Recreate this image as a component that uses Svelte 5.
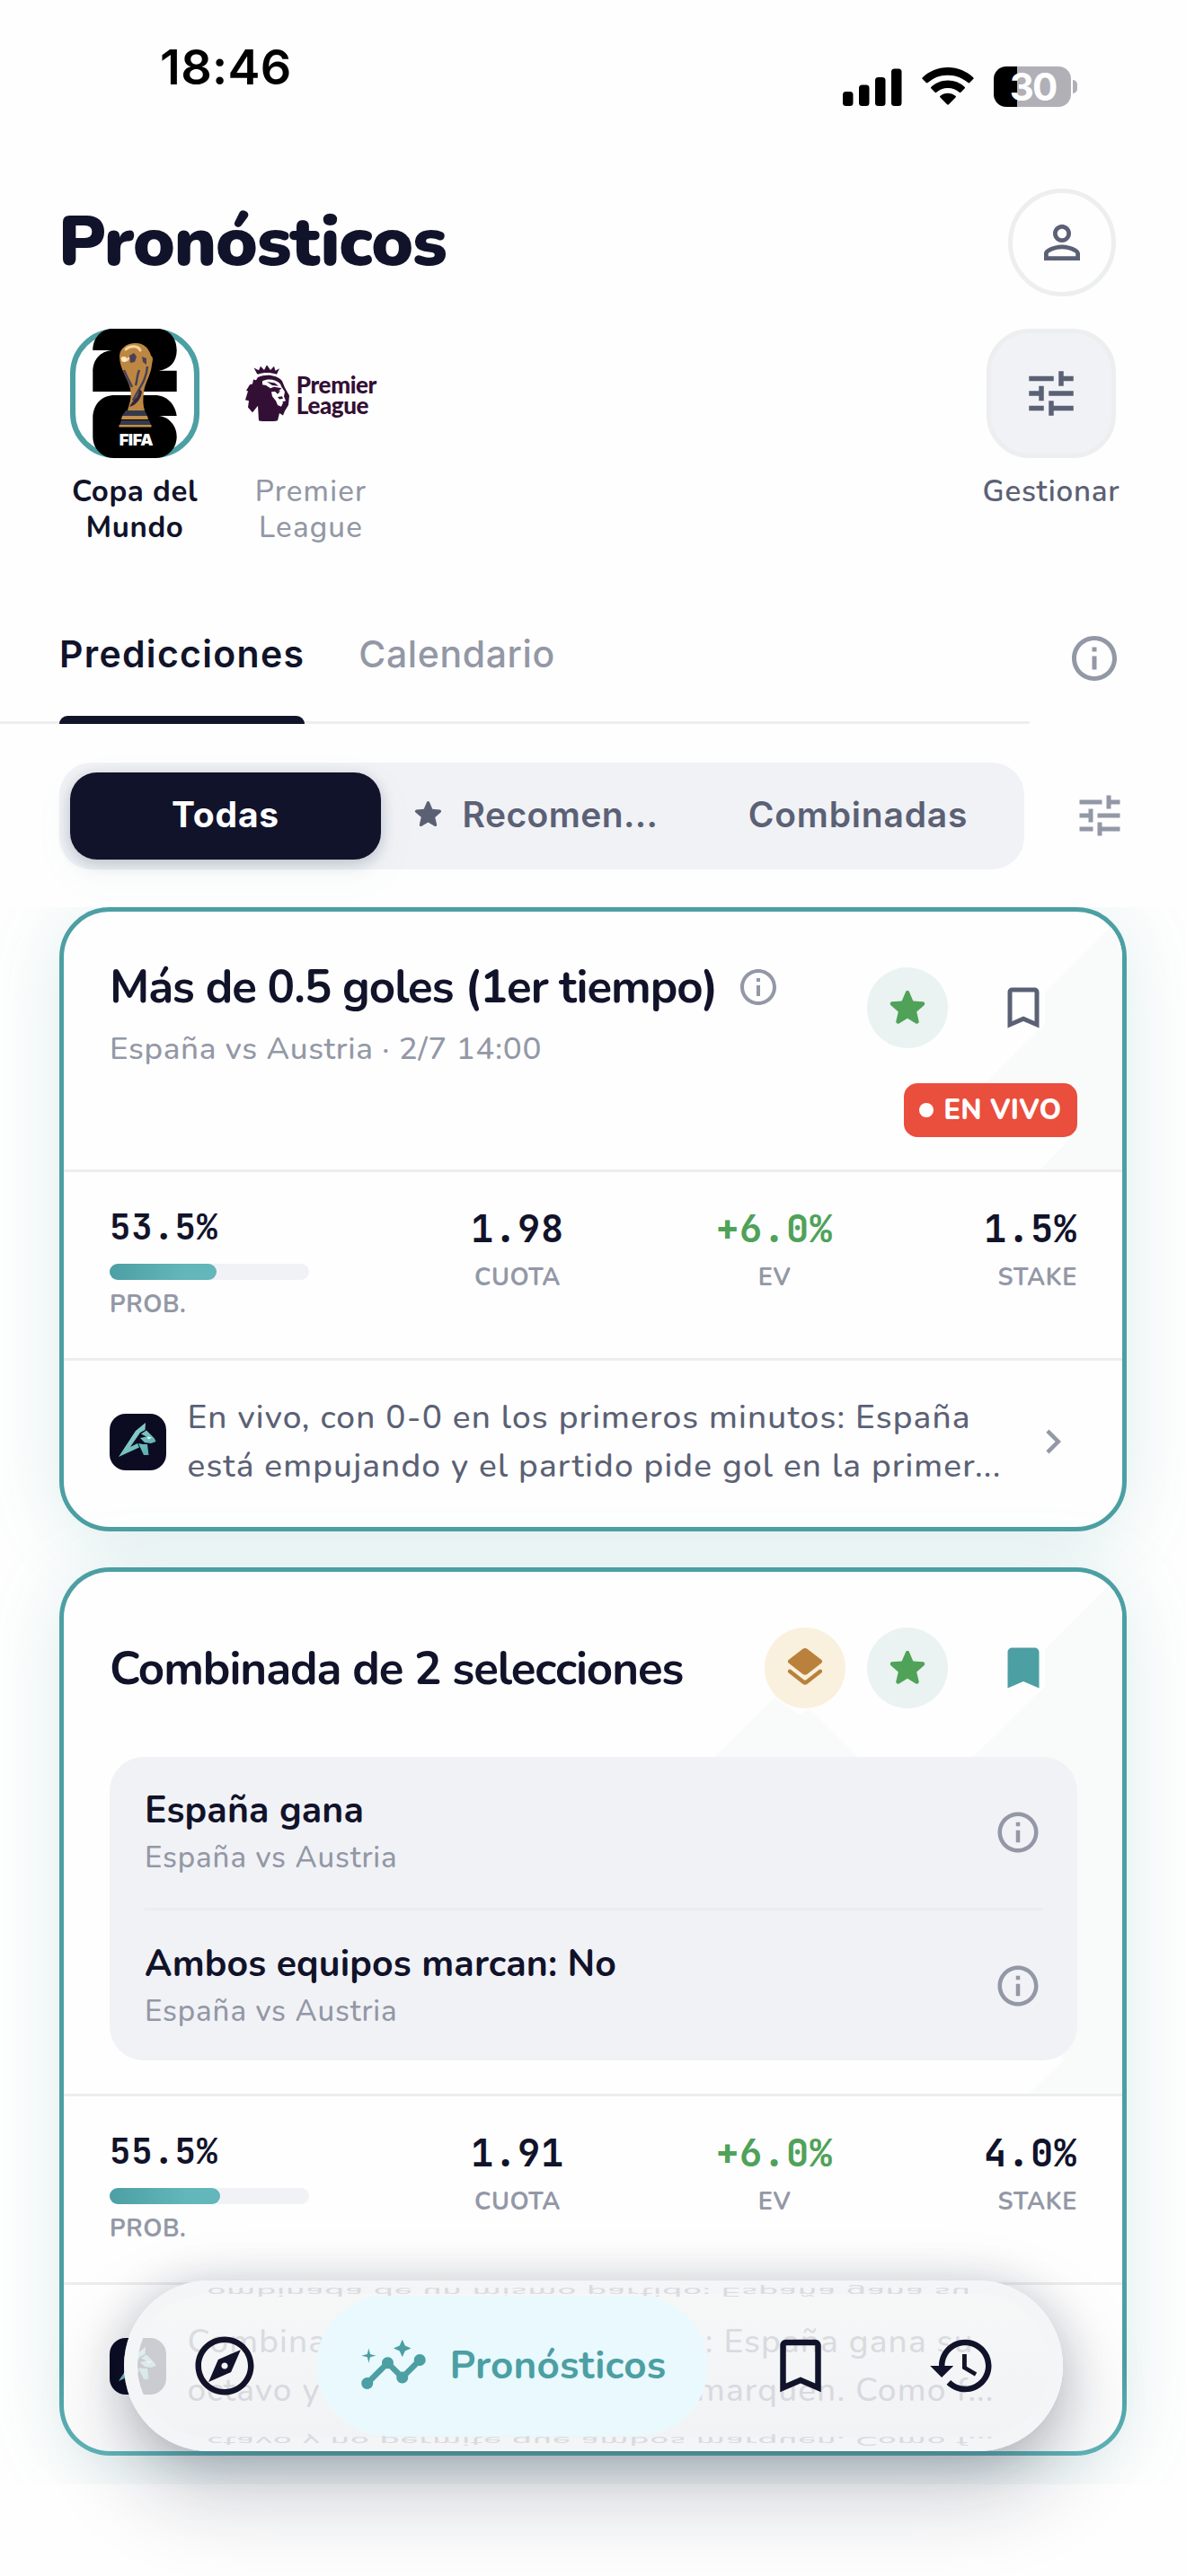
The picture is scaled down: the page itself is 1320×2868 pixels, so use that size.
<script>
  const icons = {
    person:
      "M12 5.9a2.1 2.1 0 1 1 0 4.2 2.1 2.1 0 0 1 0-4.2m0 9c2.97 0 6.1 1.46 6.1 2.1v1.1H5.9V17c0-.64 3.13-2.1 6.1-2.1M12 4C9.79 4 8 5.79 8 8s1.79 4 4 4 4-1.79 4-4-1.79-4-4-4zm0 9c-2.67 0-8 1.34-8 4v3h16v-3c0-2.66-5.33-4-8-4z",
    tune: "M3 17v2h6v-2H3zM3 5v2h10V5H3zm10 16v-2h8v-2h-8v-2h-2v6h2zM7 9v2H3v2h4v2h2V9H7zm14 4v-2H11v2h10zm-6-4h2V7h4V5h-4V3h-2v6z",
    info: "M11 7h2v2h-2zm0 4h2v6h-2zm1-9C6.48 2 2 6.48 2 12s4.48 10 10 10 10-4.48 10-10S17.52 2 12 2zm0 18c-4.41 0-8-3.59-8-8s3.59-8 8-8 8 3.59 8 8-3.59 8-8 8z",
    star: "M12 17.27l4.15 2.51c.76.46 1.69-.22 1.49-1.08l-1.1-4.72 3.67-3.18c.67-.58.31-1.68-.57-1.75l-4.83-.41-1.89-4.46c-.34-.81-1.5-.81-1.84 0L9.19 8.63l-4.83.41c-.88.07-1.24 1.17-.57 1.75l3.67 3.18-1.1 4.72c-.2.86.73 1.54 1.49 1.08l4.15-2.5z",
    bookmark:
      "M17 3H7c-1.1 0-1.99.9-1.99 2L5 21l7-3 7 3V5c0-1.1-.9-2-2-2zm0 15l-5-2.18L7 18V5h10v13z",
    bookmarkFilled: "M17 3H7c-1.1 0-1.99.9-1.99 2L5 21l7-3 7 3V5c0-1.1-.9-2-2-2z",
    layers:
      "M12.6 18.1a1 1 0 0 1-1.2 0l-6.6-5.15a1 1 0 0 0-1.25 0 1 1 0 0 0 0 1.6l7.2 5.6a2 2 0 0 0 2.5 0l7.2-5.6a1 1 0 0 0 0-1.6 1 1 0 0 0-1.25 0zM13.25 15.1l7.2-5.6a1.02 1.02 0 0 0 0-1.6l-7.2-5.6a2 2 0 0 0-2.5 0l-7.2 5.6a1.02 1.02 0 0 0 0 1.6l7.2 5.6a2 2 0 0 0 2.5 0z",
    chevron: "M10 6L8.59 7.41 13.17 12l-4.58 4.59L10 18l6-6z",
    compass:
      "M12 10.9c-.61 0-1.1.49-1.1 1.1s.49 1.1 1.1 1.1c.61 0 1.1-.49 1.1-1.1s-.49-1.1-1.1-1.1zM12 2C6.48 2 2 6.48 2 12s4.48 10 10 10 10-4.48 10-10S17.52 2 12 2zm0 18c-4.41 0-8-3.59-8-8s3.59-8 8-8 8 3.59 8 8-3.59 8-8 8zM14.19 14.19L6.5 17.5l3.31-7.69L17.5 6.5z",
    insights:
      "M21 8c-1.45 0-2.26 1.44-1.93 2.51l-3.55 3.56c-.3-.09-.74-.09-1.04 0l-2.55-2.55C12.27 10.45 11.46 9 10 9c-1.45 0-2.27 1.44-1.93 2.52l-4.56 4.55C2.44 15.74 1 16.55 1 18c0 1.1.9 2 2 2 1.45 0 2.26-1.44 1.93-2.51l4.55-4.56c.3.09.74.09 1.04 0l2.55 2.55C12.73 16.55 13.54 18 15 18c1.45 0 2.27-1.44 1.93-2.52l3.56-3.55c1.07.33 2.51-.48 2.51-1.93 0-1.1-.9-2-2-2zM15 9l.94-2.07L18 6l-2.06-.93L15 3l-.92 2.07L12 6l2.08.93zM3.5 11L4 9l2-.5L4 8l-.5-2L3 8l-2 .5L3 9z",
    history:
      "M13 3c-4.97 0-9 4.03-9 9H1l3.89 3.89.07.14L9 12H6c0-3.87 3.13-7 7-7s7 3.13 7 7-3.13 7-7 7c-1.93 0-3.68-.79-4.94-2.06l-1.42 1.42C8.27 19.99 10.51 21 13 21c4.97 0 9-4.03 9-9s-4.03-9-9-9zm-1 5v5l4.28 2.54.72-1.21-3.5-2.08V8H12z",
  };

  const cards = [
    {
      title: "Más de 0.5 goles (1er tiempo)",
      match: "España vs Austria · 2/7 14:00",
      live: true,
      saved: false,
      legs: [],
      prob: 53.5,
      odds: "1.98",
      ev: "+6.0%",
      stake: "1.5%",
      analysis: [
        "En vivo, con 0-0 en los primeros minutos: España",
        "está empujando y el partido pide gol en la primer...",
      ],
    },
    {
      title: "Combinada de 2 selecciones",
      live: false,
      saved: true,
      legs: [
        { pick: "España gana", match: "España vs Austria" },
        { pick: "Ambos equipos marcan: No", match: "España vs Austria" },
      ],
      prob: 55.5,
      odds: "1.91",
      ev: "+6.0%",
      stake: "4.0%",
      analysis: [
        "Combinada de un mismo partido: España gana su",
        "octavo y no permite que ambos marquen. Como f...",
      ],
    },
  ];
</script>

{#snippet icon(name, size)}
  <svg class="icon" width={size} height={size} viewBox="0 0 24 24">
    <path d={icons[name]} fill="currentColor" />
  </svg>
{/snippet}

<main>
  <div class="status">
    <span class="time">18:46</span>
    <div class="signals">
      <svg width="66" height="42" viewBox="0 0 66 42">
        <rect x="0" y="26" width="11.5" height="16" rx="3.5" />
        <rect x="18" y="18.5" width="11.5" height="23.5" rx="3.5" />
        <rect x="36" y="10" width="11.5" height="32" rx="3.5" />
        <rect x="54" y="0.5" width="11.5" height="41.5" rx="3.5" />
      </svg>
      <svg class="wifi" width="58" height="43" viewBox="0 0 58 43">
        <path d="M29 0C18 0 8 4.300 0.800 11.300a1.200 1.200 0 0 0 0 1.800l4 4c.5.500 1.300.500 1.800 0A32.500 32.500 0 0 1 29 8.700c8.700 0 16.600 3.200 22.400 8.400.5.500 1.300.500 1.800 0l4-4a1.200 1.200 0 0 0 0-1.800C50 4.300 40 0 29 0z" />
        <path d="M29 14.500c-7.200 0-13.700 2.800-18.600 7.300a1.200 1.200 0 0 0 0 1.800l4.200 4.200c.5.500 1.200.5 1.700 0A18.500 18.500 0 0 1 29 22.900c4.900 0 9.300 1.900 12.700 4.900.5.500 1.200.500 1.700 0l4.200-4.200a1.200 1.200 0 0 0 0-1.800A27.300 27.300 0 0 0 29 14.500z" />
        <path d="M29 28.700c-3.200 0-6.200 1.200-8.500 3.100a1.200 1.200 0 0 0 0 1.800l7.600 7.700c.5.500 1.300.5 1.800 0l7.600-7.700a1.200 1.200 0 0 0 0-1.800A13.300 13.300 0 0 0 29 28.700z" />
      </svg>
      <div class="battery">30</div>
      <span class="battery-cap"></span>
    </div>
  </div>

  <header>
    <h1>Pronósticos</h1>
    <div class="avatar">{@render icon("person", 60)}</div>
  </header>

  <section class="leagues">
    <div class="league active">
      <svg width="144" height="144" viewBox="0 0 144 144">
        <rect x="3" y="3" width="138" height="138" rx="47" fill="#fff" stroke="#4c9fa3" stroke-width="6" />
        <path d="M25.300 24C25.300 10 35 0 47 0H97C110 0 118.700 10 118.700 24C118.700 36 112 45 98.700 46.700H118.700V70H25.300V48C25.300 35 33 25 47 24Z" />
        <path d="M25.300 100C25.300 84 35 74 50 74H94C108 74 117 84 118.700 97H98.700C110 98 118.700 108 118.700 120C118.700 134 108 144 95 144H49C36 144 25.300 134 25.300 120Z" />
        <path d="M73 16c9 0 15 6 17 14 3 2 2 5 1 10-1 12-8 20-9 31-1 8-1 14 1 20H64c2-8 5-14 3-24-2-11-12-22-12-36 0-9 8-15 18-15z" fill="#bd8742" />
        <path d="M62 23c5-5 14-4 16 1M58 33c2 3 5 3 7 0" fill="none" stroke="#f4d3a0" stroke-width="3" stroke-linecap="round" />
        <path d="M66 30l5-3 3 4-2 6-5 1zM80 31l5 2 0 7-4-3z" fill="#49405a" />
        <path d="M86 42c-1 15-8 22-16 38M60 46c3 8 6 12 9 19M77 46c-3 7-2 11-4 17" fill="none" stroke="#49405a" stroke-width="2.500" />
        <path d="M77 67c0 9-7 12-11 20 8-2 13-9 14-17z" fill="#2e2540" />
        <circle cx="60" cy="34" r="3" fill="#ffe7c4" />
        <path d="M62 91h21l3 6H58zM57 102h31l2 5H55z" fill="#343a4d" />
        <path d="M58 97h28l1 4H57zM54.500 107h36v2.500h-36z" fill="#c38f4b" />
        <text x="73.500" y="130" text-anchor="middle">FIFA</text>
      </svg>
      <span>Copa del<br />Mundo</span>
    </div>
    <div class="league">
      <div class="premier">
        <svg width="50" height="62" viewBox="0 0 50 76" preserveAspectRatio="none">
          <path d="M13 11L9.500 3l5.500 3.500L17 1l4 5 3-7 4 7 4-5 1.500 6L38 4l-3 8c-7-3-15-3-21 0z" />
          <path d="M14 16c10-5 21-3 27 5l3 9 5 11-1 13-4 8-2 6-4-3-2 10c-7 2-15 2-21 0l-1-20-6 9-5-7 1-9-4-1 3-12-2-1 4-8 3-1 1-6 3 1z" />
          <path d="M19 21c7-4 15-2 20 4l2 6-9-2-4 2-5-4-4-1zM29 36l8-1 4-5 3 6-1 6 2 6-5 2-6-2-4-6zM34 48l6-1 2 4-2 5-4-2z" fill="#fefefe" />
          <path d="M24 22l9 2 4 4-7-1zM32 34l7 1-3 4zM36 43l5-1 1 3-4 1z" />
        </svg>
        <b>Premier<br />League</b>
      </div>
      <span>Premier<br />League</span>
    </div>
    <div class="league manage">
      <div class="tile">{@render icon("tune", 66)}</div>
      <span>Gestionar</span>
    </div>
  </section>

  <section class="tabs">
    <div class="tablist">
      <span class="tab active">Predicciones</span>
      <span class="tab">Calendario</span>
    </div>
    <div class="help">{@render icon("info", 60)}</div>
  </section>

  <section class="filters">
    <div class="segments">
      <span class="segment active">Todas</span>
      <span class="segment starred">{@render icon("star", 41)}Recomen...</span>
      <span class="segment">Combinadas</span>
    </div>
    {@render icon("tune", 60)}
  </section>

  <section class="list">
    {#each cards as card, i}
      <article>
        <div class="head">
          <svg class="watermark" width="1178" height="582">
            {#if i === 0}
              <path d="M1178 4L1092 90V125L985 231L1128 245L1087 287V600H1178Z" />
            {:else}
              <path d="M1178 0L1092 86V127L960 258L1113 543L1073 582H1178ZM724 206L791 140L819 159L830 152L884 206Z" />
            {/if}
          </svg>
          <div class="top">
            <div class="titles">
              <h2>
                {card.title}
                {#if card.match}{@render icon("info", 48)}{/if}
              </h2>
              {#if card.match}<p class="match">{card.match}</p>{/if}
            </div>
            <div class="side">
              <div class="actions">
                {#if card.legs.length}
                  <span class="bubble combo">{@render icon("layers", 52)}</span>
                {/if}
                <span class="bubble">{@render icon("star", 54)}</span>
                <span class="save" class:saved={card.saved}>
                  {@render icon(card.saved ? "bookmarkFilled" : "bookmark", 60)}
                </span>
              </div>
              {#if card.live}<span class="live"><i></i>EN VIVO</span>{/if}
            </div>
          </div>
          {#if card.legs.length}
            <div class="legs">
              {#each card.legs as leg}
                <div class="leg">
                  <div>
                    <h3>{leg.pick}</h3>
                    <p>{leg.match}</p>
                  </div>
                  {@render icon("info", 54)}
                </div>
              {/each}
            </div>
          {/if}
        </div>
        <div class="stats">
          <div class="prob">
            <strong>{card.prob}%</strong>
            <div class="bar"><div style="width: {card.prob}%"></div></div>
            <small>PROB.</small>
          </div>
          <div><strong>{card.odds}</strong><small>CUOTA</small></div>
          <div class="ev"><strong>{card.ev}</strong><small>EV</small></div>
          <div class="stake"><strong>{card.stake}</strong><small>STAKE</small></div>
        </div>
        <div class="analysis">
          <svg class="wolf" width="63" height="63" viewBox="0 0 63 63">
            <defs>
              <linearGradient id="fur{i}" x1="0" y1="0" x2="1" y2="1">
                <stop offset="0" stop-color="#a5e0dc" />
                <stop offset="1" stop-color="#4fa5a9" />
              </linearGradient>
            </defs>
            <rect width="63" height="63" rx="18" fill="#0b0c22" />
            <path
              d="M40 10L29 19L10 48L33 37.500L31 33L23 37L34 21L39.500 18ZM35 22.500L41 18.500L43.500 21L50 27.500L51.500 31L46 33L39 32L34 27L41 25.500ZM32 33L37 34H42L43.500 46H38Z"
              fill="url(#fur{i})"
            />
            <path d="M42 25.500l5 1-4 2z" fill="#f3fffd" />
          </svg>
          <p>{card.analysis[0]}<br />{card.analysis[1]}</p>
          {#if i === 0}{@render icon("chevron", 54)}{/if}
        </div>
      </article>
    {/each}
  </section>

  <nav>
    <!-- glass rim: the text below is mirrored along both edges -->
    <div class="rim" aria-hidden="true">
      <span>ombinada de un mismo partido: España gana su</span>
      <span>ctavo y no permite que ambos marquen. Como f...</span>
    </div>
    {@render icon("compass", 78)}
    <div class="current">{@render icon("insights", 78)}Pronósticos</div>
    {@render icon("bookmark", 78)}
    {@render icon("history", 78)}
  </nav>
</main>

<style>
  :global(body) {
    background: #fefefe;
  }
  main {
    position: relative;
    display: flex;
    flex-direction: column;
    box-sizing: border-box;
    width: 1320px;
    height: 2868px;
    overflow: hidden;
    background: #fefefe;
    color: #11132a;
    font-family: "Nunito", "Nunito Sans", Lato, sans-serif;
  }
  main * {
    box-sizing: border-box;
  }
  h1,
  h2,
  h3,
  p {
    margin: 0;
  }
  span,
  b,
  h1,
  h2,
  h3,
  p,
  strong,
  small {
    white-space: nowrap;
  }
  .icon {
    display: block;
    flex: none;
  }

  /* status bar */

  .status {
    display: flex;
    justify-content: space-between;
    height: 210px;
    padding: 45px 121px 0 178px;
    font-family: Inter, sans-serif;
    color: #000;
  }
  .time {
    font-size: 54px;
    font-weight: 600;
    line-height: 60px;
    letter-spacing: 0.3px;
  }
  .signals {
    display: flex;
    align-items: center;
    height: 45px;
    margin-top: 29px;
  }
  .wifi {
    margin: 0 22px;
  }
  .battery {
    width: 86px;
    height: 45px;
    padding-left: 1px;
    border-radius: 14px;
    background: linear-gradient(90deg, #000 26px, #b0b0b6 26px);
    color: #fff;
    font-size: 42px;
    font-weight: 700;
    line-height: 45px;
    letter-spacing: -2px;
    text-align: center;
  }
  .battery-cap {
    width: 5px;
    height: 15px;
    margin-left: 2px;
    border-radius: 0 5px 5px 0;
    background: #b0b0b6;
  }

  /* title */

  header {
    display: flex;
    align-items: center;
    justify-content: space-between;
    height: 120px;
    padding: 0 78px 0 65px;
  }
  h1 {
    font-size: 78px;
    font-weight: 900;
    line-height: 100px;
    letter-spacing: -1.1px;
  }
  .avatar {
    display: flex;
    align-items: center;
    justify-content: center;
    width: 120px;
    height: 120px;
    border: 5px solid #edeeef;
    border-radius: 50%;
    color: #5b6175;
  }

  /* leagues */

  .leagues {
    display: flex;
    gap: 24px;
    height: 325px;
    padding: 36px 64px 0;
  }
  .league {
    display: flex;
    flex-direction: column;
    align-items: center;
    gap: 18px;
    width: 172px;
    color: #9398a6;
    font-size: 33px;
    font-weight: 500;
    line-height: 39.5px;
    letter-spacing: 1.2px;
    text-align: center;
  }
  .league.active {
    color: #11132a;
    font-weight: 700;
    letter-spacing: 0.6px;
  }
  .league text {
    fill: #fff;
    font: 900 18px Inter, sans-serif;
    letter-spacing: -0.3px;
  }
  .manage {
    margin-left: auto;
    color: #5b6175;
    font-weight: 600;
    letter-spacing: 0.8px;
  }
  .tile {
    display: flex;
    align-items: center;
    justify-content: center;
    width: 144px;
    height: 144px;
    border: 5px solid #edeeef;
    border-radius: 48px;
    background: #f1f2f6;
  }
  .premier {
    display: flex;
    align-items: center;
    justify-content: space-between;
    width: 146px;
    height: 144px;
    color: #330f35;
    fill: #330f35;
  }
  .premier b {
    padding-top: 4px;
    font: 900 26px/23px Lato, sans-serif;
    letter-spacing: -0.4px;
    text-align: left;
  }

  /* tabs */

  .tabs {
    display: flex;
    height: 151px;
  }
  .tablist {
    display: flex;
    gap: 60px;
    width: 1146px;
    padding-left: 66px;
    border-bottom: 3px solid #edeeee;
  }
  .tab {
    height: 151px;
    padding-top: 43px;
    color: #9398a6;
    font-family: Inter, sans-serif;
    font-size: 41px;
    font-weight: 500;
    line-height: 60px;
    letter-spacing: 0.6px;
  }
  .tab.active {
    display: flex;
    flex-direction: column;
    color: #11132a;
    font-weight: 600;
    letter-spacing: 1.3px;
  }
  .tab.active:after {
    content: "";
    height: 9.5px;
    margin-top: auto;
    border-radius: 9px 9px 0 0;
    background: #11132a;
  }
  .help {
    padding: 48px 0 0 42px;
    color: #9398a6;
  }

  /* filters */

  .filters {
    display: flex;
    align-items: center;
    gap: 54px;
    height: 204px;
    padding: 0 66px;
    color: #9398a6;
  }
  .segments {
    display: flex;
    gap: 6px;
    width: 1075px;
    height: 119px;
    padding: 11px 12px;
    border-radius: 36px;
    background: #f1f2f6;
  }
  .segment {
    display: flex;
    flex: none;
    align-items: center;
    justify-content: center;
    width: 346px;
    padding-bottom: 3px;
    border-radius: 30px;
    color: #5b6175;
    font-family: Inter, sans-serif;
    font-size: 39px;
    font-weight: 600;
    letter-spacing: 0.8px;
  }
  .segment.active {
    background: #11132a;
    box-shadow:
      0 4px 16px rgba(17, 19, 42, 0.2),
      0 14px 40px rgba(76, 159, 163, 0.08);
    color: #fff;
    font-weight: 700;
  }
  .starred {
    gap: 18px;
    padding-right: 18px;
    letter-spacing: 0.4px;
  }

  /* cards */

  .list {
    display: flex;
    flex-direction: column;
    gap: 39.5px;
    height: 1756px;
    padding: 0 66px;
    overflow: hidden;
  }
  article {
    display: flex;
    flex: none;
    flex-direction: column;
    border: 5px solid #4c9fa3;
    border-radius: 56px;
    background: #fefefe;
    box-shadow: 0 10px 80px rgba(76, 159, 163, 0.18);
  }
  article:last-child {
    border-color: transparent;
    background:
      linear-gradient(#fefefe, #fefefe) padding-box,
      linear-gradient(#4c9fa3 90%, #61b6ba) border-box;
  }
  .head {
    position: relative;
    min-height: 287px;
    padding: 47px 50px 0 51px;
    overflow: hidden;
    border-radius: 51px 51px 0 0;
  }
  .watermark {
    position: absolute;
    top: 0;
    left: 0;
    fill: #f9fbfa;
  }
  .top {
    position: relative;
    display: flex;
    justify-content: space-between;
  }
  .titles {
    display: flex;
    flex-direction: column;
    gap: 17px;
    padding-top: 7px;
  }
  article:last-child .titles {
    padding-top: 31px;
  }
  h2 {
    display: flex;
    align-items: center;
    gap: 22px;
    font-size: 51px;
    font-weight: 700;
    line-height: 60px;
    letter-spacing: -1.05px;
  }
  h2 .icon {
    color: #9398a6;
  }
  .match {
    color: #9398a6;
    font-size: 35px;
    font-weight: 500;
    line-height: 44px;
    letter-spacing: 0.65px;
  }
  .side {
    display: flex;
    flex-direction: column;
    align-items: flex-end;
    gap: 24px;
  }
  .actions {
    display: flex;
    align-items: center;
    gap: 24px;
    height: 120px;
  }
  .bubble {
    display: flex;
    align-items: center;
    justify-content: center;
    width: 90px;
    height: 90px;
    border-radius: 50%;
    background: #eaf3f1;
    color: #4fa258;
  }
  .combo {
    background: #faf0de;
    color: #ba813c;
  }
  .save {
    display: flex;
    align-items: center;
    justify-content: center;
    width: 120px;
    color: #5b6175;
  }
  .saved {
    color: #4c9fa3;
  }
  .live {
    display: flex;
    align-items: center;
    gap: 11px;
    height: 60px;
    padding: 0 17.5px;
    border-radius: 15px;
    background: #ea4e3d;
    color: #fff;
    font-size: 31px;
    font-weight: 800;
    letter-spacing: 0.3px;
  }
  .live i {
    width: 16px;
    height: 16px;
    border-radius: 50%;
    background: #fff;
  }
  .legs {
    position: relative;
    height: 338.5px;
    margin: 39px 0 37px;
    padding: 0 39px;
    border-radius: 38px;
    background: #f1f2f6;
  }
  .leg {
    display: flex;
    align-items: center;
    justify-content: space-between;
    height: 168px;
    color: #9398a6;
  }
  .leg + .leg {
    height: 171px;
    border-top: 3px solid #ebecee;
  }
  .leg > div {
    padding-top: 2px;
  }
  h3 {
    margin-bottom: 6px;
    color: #11132a;
    font-size: 41px;
    font-weight: 700;
    line-height: 50px;
    letter-spacing: 0.15px;
  }
  .leg p {
    font-size: 33px;
    font-weight: 500;
    line-height: 44px;
    letter-spacing: 0.9px;
  }

  /* numbers */

  .stats {
    display: grid;
    grid-template-columns: 311px 286px 286px 194px;
    height: 210px;
    padding: 37px 50px 0 51px;
    border-top: 3px solid #ecedee;
  }
  .stats > div {
    display: flex;
    flex-direction: column;
    gap: 12px;
    align-items: center;
  }
  .stats strong {
    font-family: "JetBrains Mono", "DejaVu Sans Mono", monospace;
    font-size: 42px;
    font-weight: 600;
    line-height: 52px;
    letter-spacing: 0.8px;
  }
  .stats small {
    color: #9398a6;
    font-size: 27px;
    font-weight: 700;
    line-height: 34px;
    letter-spacing: 0.6px;
  }
  .stats .prob {
    gap: 0;
    align-items: flex-start;
  }
  .prob strong {
    font-size: 39px;
    line-height: 49px;
  }
  .bar {
    width: 222px;
    height: 18px;
    margin: 16px 0 11px;
    border-radius: 9px;
    background: #f1f2f6;
  }
  .bar div {
    height: 18px;
    border-radius: 9px;
    background: linear-gradient(90deg, #4c9fa3, #63b6ba 70%);
  }
  .ev strong {
    color: #4fa258;
  }
  .stats .stake {
    align-items: flex-end;
  }

  .analysis {
    display: flex;
    align-items: center;
    gap: 23.5px;
    height: 188px;
    padding: 0 50px 5px 51px;
    border-top: 3px solid #ecedee;
    color: #5b6175;
    font-size: 37px;
    font-weight: 500;
    line-height: 54px;
    letter-spacing: 1.15px;
  }
  .analysis .icon {
    margin-left: auto;
    color: #9398a6;
  }
  .wolf {
    flex: none;
  }

  /* floating bar */

  nav {
    position: absolute;
    top: 2539px;
    left: 137.5px;
    display: flex;
    align-items: center;
    width: 1045.5px;
    height: 190px;
    padding: 0 73px;
    border-radius: 95px;
    background: linear-gradient(rgba(245, 246, 246, 0.83), rgba(239, 240, 243, 0.83));
    box-shadow:
      0 44px 100px rgba(17, 25, 50, 0.24),
      0 6px 50px rgba(17, 30, 50, 0.2);
  }
  nav > .icon {
    position: relative;
  }
  nav > .icon:last-child {
    margin-left: 102px;
  }
  .current {
    position: relative;
    display: flex;
    align-items: center;
    gap: 24px;
    width: 436px;
    height: 156px;
    margin: 0 64px 0 63.5px;
    padding-left: 46.5px;
    border-radius: 78px;
    background: #e9f9fd;
    color: #4c9fa3;
    font-size: 44px;
    font-weight: 700;
    letter-spacing: 0.2px;
  }
  .rim {
    position: absolute;
    inset: 0;
    display: flex;
    flex-direction: column;
    justify-content: space-between;
    padding: 0 93px;
    overflow: hidden;
    border-radius: 95px;
    box-shadow: inset 0 0 0 15px #f4f5f6;
    color: #d9dbe1;
    font-size: 37px;
    font-weight: 500;
    line-height: 24px;
    letter-spacing: 1.15px;
  }
  .rim span {
    transform: scaleY(-0.35);
  }
</style>
